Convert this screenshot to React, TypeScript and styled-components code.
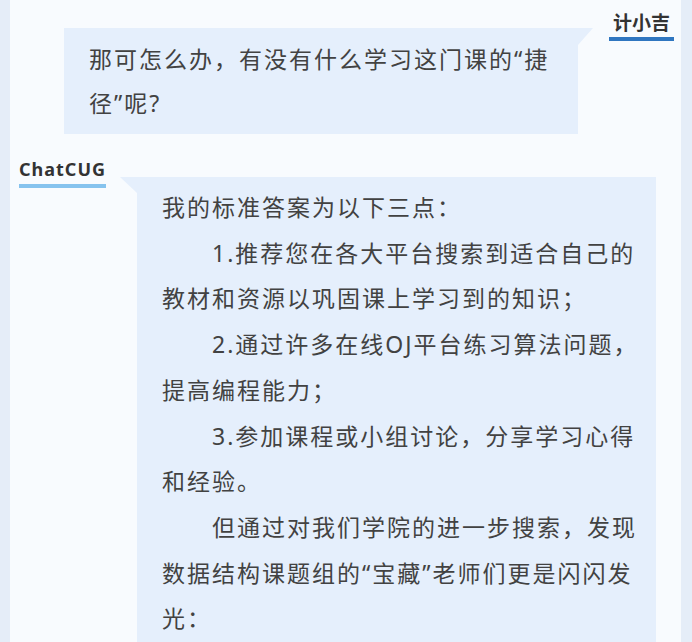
import styled, { createGlobalStyle } from 'styled-components';

const GlobalStyle = createGlobalStyle`
  html, body {
    margin: 0;
    padding: 0;
    background: #f8fbfe;
  }
  * {
    box-sizing: border-box;
  }
`;

const messages = {
  user: {
    name: '计小吉',
    text: ['那可怎么办，有没有什么学习这门课的“捷径”呢?'],
  },
  bot: {
    name: 'ChatCUG',
    text: [
      { indent: false, body: '我的标准答案为以下三点：' },
      { indent: true, body: '1.推荐您在各大平台搜索到适合自己的教材和资源以巩固课上学习到的知识；' },
      { indent: true, body: '2.通过许多在线OJ平台练习算法问题，提高编程能力；' },
      { indent: true, body: '3.参加课程或小组讨论，分享学习心得和经验。' },
      { indent: true, body: '但通过对我们学院的进一步搜索，发现数据结构课题组的“宝藏”老师们更是闪闪发光：' },
    ],
  },
};

const App = () => {
  return (
    <>
      <GlobalStyle />
      <Frame>
        <UserRow>
          <UserBubble>
            {messages.user.text.map((t) => (
              <Paragraph key={t}>{t}</Paragraph>
            ))}
          </UserBubble>
          <NameTag $tone="dark" $cjk>
            {messages.user.name}
          </NameTag>
        </UserRow>

        <BotRow>
          <NameTag $tone="light">{messages.bot.name}</NameTag>
          <BotBubble>
            {messages.bot.text.map((p) => (
              <Paragraph key={p.body} $indent={p.indent}>
                {p.body}
              </Paragraph>
            ))}
          </BotBubble>
        </BotRow>
      </Frame>
    </>
  );
};

export default App;

const Frame = styled.div`
  height: 642px;
  overflow: hidden;
  background: #f8fbfe;
  border-left: 10px solid #e5edf8;
  border-right: 11px solid #e5edf8;
  display: flex;
  flex-direction: column;
`;

const UserRow = styled.div`
  display: flex;
  justify-content: flex-end;
  align-items: flex-start;
  gap: 31px;
  padding: 10px 7px 0 0;
`;

const BotRow = styled.div`
  display: flex;
  align-items: flex-start;
  padding: 0 25px 0 9px;
  margin-top: 23px;
`;

const NameTag = styled.div<{ $tone: 'dark' | 'light'; $cjk?: boolean }>`
  font-family: ${(p) => (p.$cjk ? '"Noto Sans CJK SC", sans-serif' : '"Noto Sans", "Noto Sans CJK SC", sans-serif')};
  font-size: ${(p) => (p.$cjk ? 19 : 18)}px;
  font-weight: bold;
  line-height: 24px;
  letter-spacing: ${(p) => (p.$cjk ? 0 : 1)}px;
  color: #333333;
  padding: 0 ${(p) => (p.$cjk ? 4 : 0)}px 3px;
  border-bottom: 4px solid ${(p) => (p.$tone === 'dark' ? '#2f76c0' : '#86c3ee')};
  white-space: nowrap;
`;

const Bubble = styled.div`
  position: relative;
  background: #e5effc;
  font-family: "Noto Sans", "Noto Sans CJK SC", sans-serif;
  font-size: 23px;
  letter-spacing: 2px;
  color: #424242;
`;

const UserBubble = styled(Bubble)`
  width: 514px;
  margin-top: 18px;
  padding: 9px 20px 9px 25px;
  line-height: 44px;

  &::after {
    content: '';
    position: absolute;
    top: 0;
    right: -15px;
    width: 0;
    height: 0;
    border-top: 17px solid #e5effc;
    border-right: 15px solid transparent;
  }
`;

const BotBubble = styled(Bubble)`
  width: 519px;
  margin-left: auto;
  margin-top: 20px;
  padding: 8px 12px 60px 25px;
  line-height: 45.7px;

  &::before {
    content: '';
    position: absolute;
    top: 0;
    left: -17px;
    width: 0;
    height: 0;
    border-top: 16px solid #e5effc;
    border-left: 17px solid transparent;
  }
`;

const Paragraph = styled.p<{ $indent?: boolean }>`
  margin: 0;
  text-indent: ${(p) => (p.$indent ? '50px' : '0')};
`;
